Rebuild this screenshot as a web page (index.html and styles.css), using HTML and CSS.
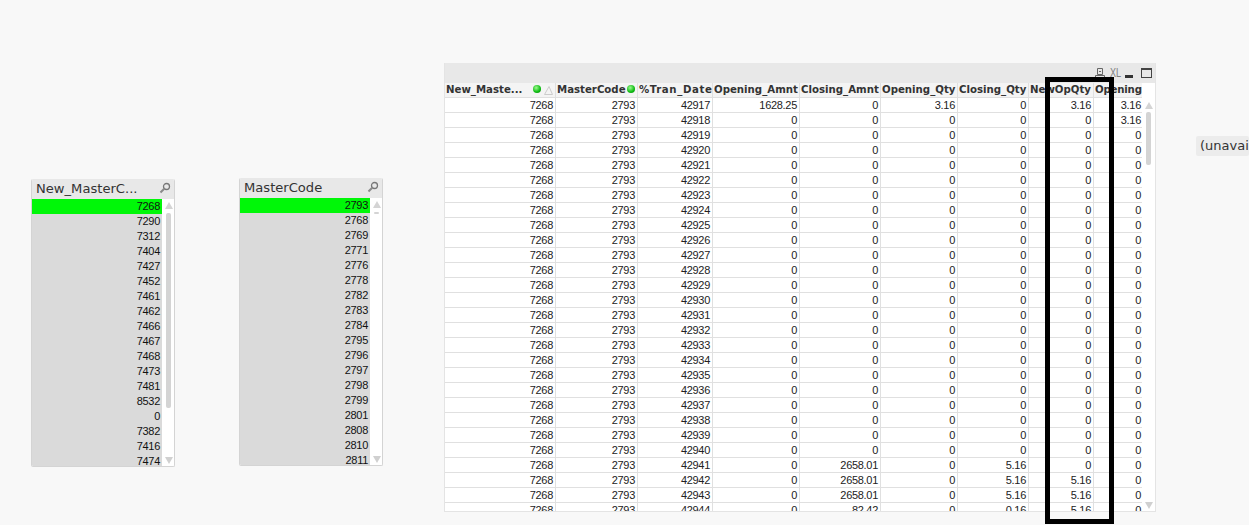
FILE: index.html
```html
<!DOCTYPE html>
<html lang="en">
<head>
<meta charset="utf-8">
<title>QlikView sheet</title>
<link rel="stylesheet" href="styles.css">
</head>
<body>
<section class="obj list list-a">
  <header class="cap"><span class="cap-title">New_MasterC...</span>
    <svg class="search" viewBox="0 0 12 12"><circle cx="7.5" cy="4.5" r="3" fill="#e8e8e8" stroke="#777" stroke-width="1.3"/><path d="M5.2 6.8 1.5 10.5" stroke="#8a8a8a" stroke-width="2"/></svg>
  </header>
  <div class="list-body">
    <div class="items">
      <div class="item sel">7268</div><div class="item">7290</div><div class="item">7312</div><div class="item">7404</div><div class="item">7427</div><div class="item">7452</div><div class="item">7461</div><div class="item">7462</div><div class="item">7466</div><div class="item">7467</div><div class="item">7468</div><div class="item">7473</div><div class="item">7481</div><div class="item">8532</div><div class="item">0</div><div class="item">7382</div><div class="item">7416</div><div class="item">7474</div>
    </div>
    <div class="sb"><i class="up"></i><i class="thumb thumb-a"></i><i class="down"></i></div>
  </div>
</section>

<section class="obj list list-b">
  <header class="cap"><span class="cap-title">MasterCode</span>
    <svg class="search" viewBox="0 0 12 12"><circle cx="7.5" cy="4.5" r="3" fill="#e8e8e8" stroke="#777" stroke-width="1.3"/><path d="M5.2 6.8 1.5 10.5" stroke="#8a8a8a" stroke-width="2"/></svg>
  </header>
  <div class="list-body">
    <div class="items">
      <div class="item sel">2793</div><div class="item">2768</div><div class="item">2769</div><div class="item">2771</div><div class="item">2776</div><div class="item">2778</div><div class="item">2782</div><div class="item">2783</div><div class="item">2784</div><div class="item">2795</div><div class="item">2796</div><div class="item">2797</div><div class="item">2798</div><div class="item">2799</div><div class="item">2801</div><div class="item">2808</div><div class="item">2810</div><div class="item">2811</div>
    </div>
    <div class="sb"><i class="up"></i><i class="thumb thumb-b"></i><i class="down"></i></div>
  </div>
</section>

<section class="obj tbl">
  <header class="tbl-cap">
    <svg class="ic-print" viewBox="0 0 10 10"><path d="M2.5 .5h5v6h-5zM4 3.5h2M.5 7.5h9v2h-9z" fill="none" stroke="#666"/></svg>
    <span class="xl">XL</span>
    <i class="ic-min"></i>
    <i class="ic-max"></i>
  </header>
  <div class="tbl-body">
    <div class="tbl-clip">
      <table>
        <colgroup><col class="c1"><col class="c2"><col class="c3"><col class="c4"><col class="c5"><col class="c6"><col class="c7"><col class="c8"><col class="c9"></colgroup>
        <thead>
          <tr>
            <th class="th-first"><span class="th-name">New_Maste...</span><i class="dot dot-a"></i><svg class="sort" viewBox="0 0 9 9"><path d="M.5 8.5h8L5 .5z" fill="none" stroke="#ccc"/></svg></th>
            <th class="th-dot">MasterCode<i class="dot"></i></th>
            <th class="th-wide">%Tran_Date</th><th>Opening_Amnt</th><th>Closing_Amnt</th><th>Opening_Qty</th><th>Closing_Qty</th><th>NewOpQty</th><th class="th-last">Opening</th>
          </tr>
        </thead>
        <tbody>
          <tr><td>7268</td><td>2793</td><td>42917</td><td>1628.25</td><td>0</td><td>3.16</td><td>0</td><td>3.16</td><td>3.16</td></tr>
          <tr><td>7268</td><td>2793</td><td>42918</td><td>0</td><td>0</td><td>0</td><td>0</td><td>0</td><td>3.16</td></tr>
          <tr><td>7268</td><td>2793</td><td>42919</td><td>0</td><td>0</td><td>0</td><td>0</td><td>0</td><td>0</td></tr>
          <tr><td>7268</td><td>2793</td><td>42920</td><td>0</td><td>0</td><td>0</td><td>0</td><td>0</td><td>0</td></tr>
          <tr><td>7268</td><td>2793</td><td>42921</td><td>0</td><td>0</td><td>0</td><td>0</td><td>0</td><td>0</td></tr>
          <tr><td>7268</td><td>2793</td><td>42922</td><td>0</td><td>0</td><td>0</td><td>0</td><td>0</td><td>0</td></tr>
          <tr><td>7268</td><td>2793</td><td>42923</td><td>0</td><td>0</td><td>0</td><td>0</td><td>0</td><td>0</td></tr>
          <tr><td>7268</td><td>2793</td><td>42924</td><td>0</td><td>0</td><td>0</td><td>0</td><td>0</td><td>0</td></tr>
          <tr><td>7268</td><td>2793</td><td>42925</td><td>0</td><td>0</td><td>0</td><td>0</td><td>0</td><td>0</td></tr>
          <tr><td>7268</td><td>2793</td><td>42926</td><td>0</td><td>0</td><td>0</td><td>0</td><td>0</td><td>0</td></tr>
          <tr><td>7268</td><td>2793</td><td>42927</td><td>0</td><td>0</td><td>0</td><td>0</td><td>0</td><td>0</td></tr>
          <tr><td>7268</td><td>2793</td><td>42928</td><td>0</td><td>0</td><td>0</td><td>0</td><td>0</td><td>0</td></tr>
          <tr><td>7268</td><td>2793</td><td>42929</td><td>0</td><td>0</td><td>0</td><td>0</td><td>0</td><td>0</td></tr>
          <tr><td>7268</td><td>2793</td><td>42930</td><td>0</td><td>0</td><td>0</td><td>0</td><td>0</td><td>0</td></tr>
          <tr><td>7268</td><td>2793</td><td>42931</td><td>0</td><td>0</td><td>0</td><td>0</td><td>0</td><td>0</td></tr>
          <tr><td>7268</td><td>2793</td><td>42932</td><td>0</td><td>0</td><td>0</td><td>0</td><td>0</td><td>0</td></tr>
          <tr><td>7268</td><td>2793</td><td>42933</td><td>0</td><td>0</td><td>0</td><td>0</td><td>0</td><td>0</td></tr>
          <tr><td>7268</td><td>2793</td><td>42934</td><td>0</td><td>0</td><td>0</td><td>0</td><td>0</td><td>0</td></tr>
          <tr><td>7268</td><td>2793</td><td>42935</td><td>0</td><td>0</td><td>0</td><td>0</td><td>0</td><td>0</td></tr>
          <tr><td>7268</td><td>2793</td><td>42936</td><td>0</td><td>0</td><td>0</td><td>0</td><td>0</td><td>0</td></tr>
          <tr><td>7268</td><td>2793</td><td>42937</td><td>0</td><td>0</td><td>0</td><td>0</td><td>0</td><td>0</td></tr>
          <tr><td>7268</td><td>2793</td><td>42938</td><td>0</td><td>0</td><td>0</td><td>0</td><td>0</td><td>0</td></tr>
          <tr><td>7268</td><td>2793</td><td>42939</td><td>0</td><td>0</td><td>0</td><td>0</td><td>0</td><td>0</td></tr>
          <tr><td>7268</td><td>2793</td><td>42940</td><td>0</td><td>0</td><td>0</td><td>0</td><td>0</td><td>0</td></tr>
          <tr><td>7268</td><td>2793</td><td>42941</td><td>0</td><td>2658.01</td><td>0</td><td>5.16</td><td>0</td><td>0</td></tr>
          <tr><td>7268</td><td>2793</td><td>42942</td><td>0</td><td>2658.01</td><td>0</td><td>5.16</td><td>5.16</td><td>0</td></tr>
          <tr><td>7268</td><td>2793</td><td>42943</td><td>0</td><td>2658.01</td><td>0</td><td>5.16</td><td>5.16</td><td>0</td></tr>
          <tr><td>7268</td><td>2793</td><td>42944</td><td>0</td><td>82.42</td><td>0</td><td>0.16</td><td>5.16</td><td>0</td></tr>
        </tbody>
      </table>
    </div>
    <div class="sb tbl-sb"><i class="up"></i><i class="thumb thumb-t"></i><i class="down"></i></div>
  </div>
</section>

<div class="obj unavail">(unavailable)</div>
<div class="obj mark"></div>
</body>
</html>
```

FILE: styles.css
```css
* { box-sizing: border-box; }
html, body { margin: 0; height: 100%; }
body {
  position: relative;
  width: 1249px;
  height: 525px;
  overflow: hidden;
  background: #f8f8f8;
  font-family: "Liberation Sans", Arial, sans-serif;
  font-size: 11px;
  letter-spacing: -.3px;
  color: #222;
}
.obj { position: absolute; }

/* list boxes */
.list {
  width: 144px;
  height: 288px;
  display: flex;
  flex-direction: column;
  background: #fff;
  border: 1px solid #d4d4d4;
  border-top: 0;
  border-radius: 2px;
  overflow: hidden;
}
.list-a { left: 31px; top: 179px; }
.list-b { left: 239px; top: 178px; }
.cap {
  height: 20px;
  flex: none;
  display: flex;
  align-items: center;
  justify-content: space-between;
  padding: 0 3px 2px 4px;
  background: #e8e8e8;
  font-family: "DejaVu Sans", sans-serif;
  font-size: 13.1px;
  letter-spacing: 0;
  color: #333;
}
.search { width: 12px; height: 12px; }
.list-body { flex: 1; min-height: 0; display: flex; }
.items { width: 130px; background: #dadada; overflow: hidden; }
.item {
  height: 15px;
  line-height: 15px;
  text-align: right;
  padding-right: 2px;
  color: #111;
}
.item.sel { background: #00f708; }

/* scrollbars */
.sb {
  position: relative;
  width: 12px;
  background: #fff;
}
.up, .down {
  position: absolute;
  left: 3px;
  width: 0;
  height: 0;
  border-left: 4px solid transparent;
  border-right: 4px solid transparent;
}
.up { top: 3px; border-bottom: 7px solid #d4d4d4; }
.down { bottom: 2px; border-top: 7px solid #d0d0d0; }
.thumb { position: absolute; left: 4px; width: 5px; background: #d4d4d4; border-radius: 2px; }
.thumb-a { top: 14px; height: 195px; }
.thumb-b { top: 14px; height: 2px; }
.thumb-t { top: 29px; height: 53px; }

/* table box */
.tbl {
  left: 444px;
  top: 63px;
  width: 712px;
  height: 449px;
  display: flex;
  flex-direction: column;
  background: #fff;
  border: 1px solid #e4e4e4;
  border-top: 0;
}
.tbl-cap {
  height: 20px;
  flex: none;
  display: flex;
  align-items: center;
  justify-content: flex-end;
  padding: 0 3px 1px 0;
  background: #e8e8e8;
  color: #666;
}
.ic-print { width: 10px; height: 10px; margin-right: 5px; }
.xl {
  width: 11px;
  font-size: 13px;
  line-height: 12px;
  letter-spacing: 0;
  white-space: nowrap;
  transform: scaleX(.7);
  transform-origin: left center;
  margin-right: 4px;
  color: #808080;
}
.ic-min { width: 8px; height: 3px; margin-top: 7px; background: #333; }
.ic-max { width: 11px; height: 10px; border: 1px solid #444; border-top-width: 2px; margin-left: 8px; }
.tbl-body { flex: 1; min-height: 0; display: flex; }
.tbl-clip { width: 698px; overflow: hidden; }
.tbl-sb { width: 13px; flex: none; }
.tbl-sb .up { top: 19px; }
table { width: 698px; table-layout: fixed; border-collapse: separate; border-spacing: 0; }
.c1 { width: 111px; } .c2 { width: 82px; } .c3 { width: 75px; } .c4 { width: 87px; } .c5 { width: 81px; }
.c6 { width: 77px; } .c7 { width: 71px; } .c8 { width: 65px; } .c9 { width: 49px; }
th, td {
  height: 15px;
  padding: 0 2px 0 1px;
  line-height: 14px;
  white-space: nowrap;
  overflow: hidden;
  border-right: 1px solid #e0e0e0;
  border-bottom: 1px solid #e0e0e0;
}
td { text-align: right; color: #222; }
th {
  font-family: "DejaVu Sans", sans-serif;
  font-size: 10.2px;
  font-weight: 700;
  letter-spacing: 0;
  text-align: left;
  background: #f4f4f4;
  color: #333;
}
.th-wide { letter-spacing: .6px; }
.th-last { letter-spacing: -.2px; }
th:last-child, td:last-child { border-right: 0; }
.th-first, .th-dot { position: relative; }
.th-name { display: block; }
.dot {
  position: absolute;
  top: 2px;
  right: 2px;
  width: 8px;
  height: 8px;
  border-radius: 50%;
  background: radial-gradient(circle at 40% 35%, #9dfb8f, #0dbb12 60%, #0a7d10);
}
.dot-a { right: 14px; }
.sort { position: absolute; top: 3px; right: 2px; width: 9px; height: 9px; }

/* loose items */
.unavail {
  left: 1196px;
  top: 136px;
  width: 53px;
  height: 20px;
  padding-left: 4px;
  line-height: 20px;
  font-family: "DejaVu Sans", sans-serif;
  font-size: 13px;
  letter-spacing: 0;
  white-space: nowrap;
  overflow: hidden;
  background: #ececec;
  border-radius: 2px;
  color: #333;
}
.mark {
  left: 1045px;
  top: 77px;
  width: 69px;
  height: 447px;
  border: 5px solid #000;
}
```
